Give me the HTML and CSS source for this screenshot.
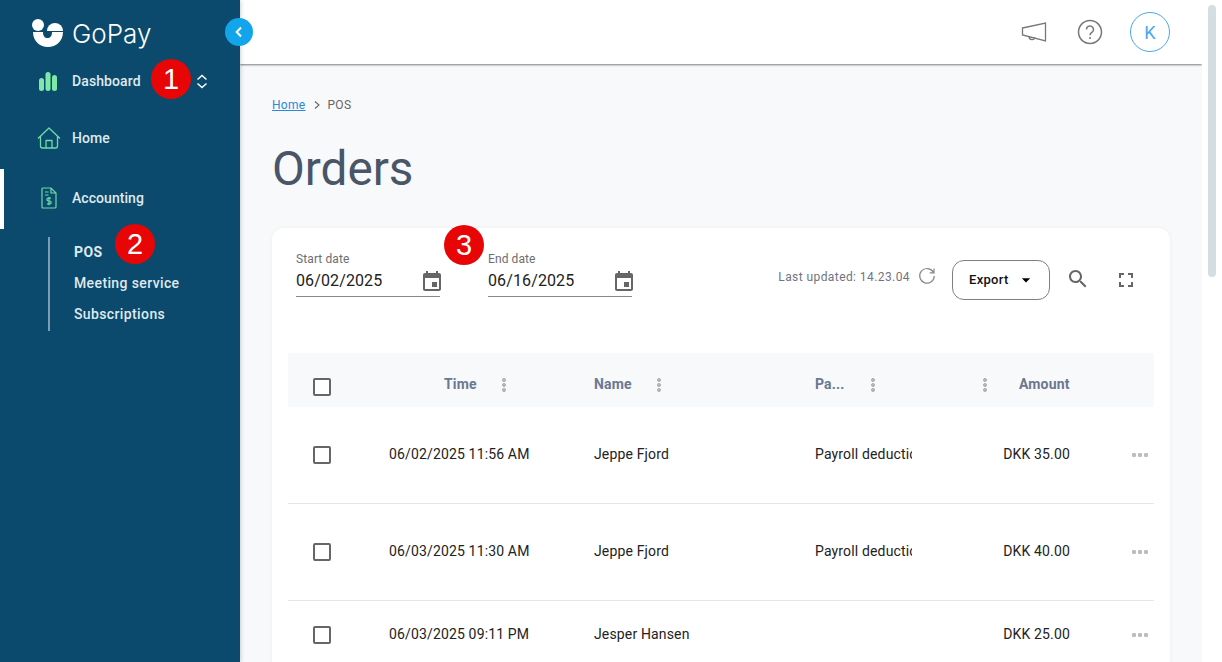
FILE: index.html
```html
<!DOCTYPE html>
<html lang="en">
<head>
<meta charset="utf-8">
<title>Orders</title>
<link rel="stylesheet" href="styles.css">
</head>
<body>
<div class="app">
  <aside class="sidebar">
    <div class="logo">
      <svg class="logo-mark" viewBox="0 0 32 28" width="32" height="28"><circle cx="6" cy="6" r="6" fill="#fff"/><path d="M15 12a8 8 0 0 1 16 0z" fill="#fff"/><path d="M1 13h10c0 4 1.800 6 4.500 6 2.700 0 4.500-2 4.500-6h11c0 9-7 15-15 15S1 22 1 13z" fill="#fff"/></svg>
      <span class="logo-text">GoPay</span>
    </div>
    <div class="switcher">
      <svg class="nav-icon" viewBox="0 0 18 19" width="18" height="19"><rect x="0" y="6" width="5" height="13" rx="2.500" fill="#7de8a8"/><rect x="6.500" y="0" width="5" height="19" rx="2.500" fill="#7de8a8"/><rect x="13" y="3" width="5" height="16" rx="2.500" fill="#7de8a8"/></svg>
      <span class="switcher-label">Dashboard</span>
      <svg class="chevrons" viewBox="0 0 12 15" width="12" height="15"><path d="M1.500 5.500 6 1.500l4.500 4M1.500 9.500l4.500 4 4.500-4" fill="none" stroke="#fff" stroke-width="1.500"/></svg>
    </div>
    <nav class="nav">
      <a class="nav-item">
        <svg class="home-icon" viewBox="0 0 24 22" width="24" height="22"><path d="M1 11.500 12 1l11 10.500M3.500 9.500V19a2 2 0 0 0 2 2h13a2 2 0 0 0 2-2V9.500M9 21v-7.500h6V21" fill="none" stroke="#6bdca6" stroke-width="1.300" stroke-linejoin="round"/></svg>
        <span>Home</span>
      </a>
      <a class="nav-item nav-item-active">
        <svg class="doc-icon" viewBox="0 0 16 22" width="16" height="22"><path d="M2 1h8l5 5v14a1 1 0 0 1-1 1H2a1 1 0 0 1-1-1V2a1 1 0 0 1 1-1zM10 1v5h5M4 5h3.500M4 8h3.500" fill="none" stroke="#6bdca6" stroke-width="1.200"/><path d="M10 11.200H7.300a1.200 1.200 0 0 0 0 2.800h1.400a1.200 1.200 0 0 1 0 2.800H6M8 10v8.200" fill="none" stroke="#6bdca6" stroke-width="1.200"/></svg>
        <span>Accounting</span>
      </a>
    </nav>
    <ul class="subnav">
      <li class="subnav-current">POS</li>
      <li>Meeting service</li>
      <li>Subscriptions</li>
    </ul>
    <button class="collapse" aria-label="Collapse"><svg viewBox="0 0 10 12" width="10" height="12"><path d="M7 1.500 2.700 6 7 10.500" fill="none" stroke="#fff" stroke-width="2"/></svg></button>
    <span class="badge badge-one">1</span>
    <span class="badge badge-two">2</span>
  </aside>

  <div class="main">
    <header class="topbar">
      <svg class="top-icon" viewBox="0 0 26 20" width="26" height="20"><path d="M1.500 6 24.500 1v18L1.500 13zM8 14.500c0 4 6 4 6 0.800" fill="none" stroke="#777" stroke-width="1.300"/></svg>
      <svg class="top-icon" viewBox="0 0 26 26" width="26" height="26"><circle cx="13" cy="13" r="11.500" fill="none" stroke="#777" stroke-width="1.500"/><path d="M9.500 10.500a3.500 3.500 0 1 1 5.500 2.800c-1.200.9-2 1.400-2 2.900" fill="none" stroke="#777" stroke-width="1.500"/><circle cx="13" cy="19" r="1" fill="#777"/></svg>
      <div class="avatar">K</div>
    </header>
    <div class="content">
      <div class="crumbs"><a class="crumb-link">Home</a><svg viewBox="0 0 8 10" width="8" height="10"><path d="M2 1.500 6 5 2 8.500" fill="none" stroke="#666" stroke-width="1.100"/></svg><span>POS</span></div>
      <h1 class="title">Orders</h1>
      <section class="card">
        <span class="badge badge-three">3</span>
        <div class="toolbar">
          <div class="field">
            <label class="field-label">Start date</label>
            <div class="field-value"><span>06/02/2025</span><svg class="icon-grey" viewBox="0 0 24 24" width="24" height="24"><path d="M17 12h-5v5h5v-5zM16 1v2H8V1H6v2H5c-1.110 0-1.990.9-1.990 2L3 19c0 1.100.89 2 2 2h14c1.100 0 2-.9 2-2V5c0-1.100-.9-2-2-2h-1V1h-2zm3 18H5V8h14v11z"/></svg></div>
          </div>
          <div class="field">
            <label class="field-label">End date</label>
            <div class="field-value"><span>06/16/2025</span><svg class="icon-grey" viewBox="0 0 24 24" width="24" height="24"><path d="M17 12h-5v5h5v-5zM16 1v2H8V1H6v2H5c-1.110 0-1.990.9-1.990 2L3 19c0 1.100.89 2 2 2h14c1.100 0 2-.9 2-2V5c0-1.100-.9-2-2-2h-1V1h-2zm3 18H5V8h14v11z"/></svg></div>
          </div>
          <div class="actions">
            <span class="updated">Last updated: 14.23.04</span>
            <svg class="refresh" viewBox="0 0 18 18" width="18" height="18"><path d="M15.500 5.500A7.300 7.300 0 1 0 16.300 9M16 1.500v4.300h-4.300" fill="none" stroke="#888" stroke-width="1.200"/></svg>
            <button class="export">Export<svg viewBox="0 0 24 24" width="20" height="20"><path d="M7 10l5 5 5-5z"/></svg></button>
            <svg class="icon-grey search" viewBox="0 0 24 24" width="24" height="24"><path d="M15.500 14h-.79l-.28-.27C15.410 12.590 16 11.110 16 9.500 16 5.910 13.090 3 9.500 3S3 5.910 3 9.500 5.910 16 9.500 16c1.610 0 3.090-.59 4.230-1.570l.27.28v.79l5 4.990L20.490 19l-4.990-5zm-6 0C7.010 14 5 11.990 5 9.500S7.010 5 9.500 5 14 7.010 14 9.500 11.990 14 9.500 14z"/></svg>
            <svg class="icon-grey fullscreen" viewBox="0 0 24 24" width="24" height="24"><path d="M7 14H5v5h5v-2H7v-3zm-2-4h2V7h3V5H5v5zm12 7h-3v2h5v-5h-2v3zM14 5v2h3v3h2V5h-5z"/></svg>
          </div>
        </div>

        <div class="table">
          <div class="row head">
            <div class="cell"><span class="check"></span></div>
            <div class="cell head-time"><span>Time</span><i class="dots"></i></div>
            <div class="cell head-gap"><span>Name</span><i class="dots"></i></div>
            <div class="cell head-pay"><span>Pa...</span><i class="dots"></i></div>
            <div class="cell head-amount"><i class="dots"></i><span>Amount</span></div>
            <div class="cell"></div>
          </div>
          <div class="row">
            <div class="cell"><span class="check"></span></div>
            <div class="cell">06/02/2025 11:56 AM</div>
            <div class="cell">Jeppe Fjord</div>
            <div class="cell clip">Payroll deduction</div>
            <div class="cell end">DKK 35.00</div>
            <div class="cell more"><i class="more-dots"></i></div>
          </div>
          <div class="row">
            <div class="cell"><span class="check"></span></div>
            <div class="cell">06/03/2025 11:30 AM</div>
            <div class="cell">Jeppe Fjord</div>
            <div class="cell clip">Payroll deduction</div>
            <div class="cell end">DKK 40.00</div>
            <div class="cell more"><i class="more-dots"></i></div>
          </div>
          <div class="row row-short">
            <div class="cell"><span class="check"></span></div>
            <div class="cell">06/03/2025 09:11 PM</div>
            <div class="cell">Jesper Hansen</div>
            <div class="cell clip"></div>
            <div class="cell end">DKK 25.00</div>
            <div class="cell more"><i class="more-dots"></i></div>
          </div>
        </div>
      </section>
    </div>
  </div>

  <div class="scrollbar"><div class="thumb"></div></div>
</div>
</body>
</html>
```

FILE: styles.css
```css
* { box-sizing: border-box; }
html, body { margin: 0; height: 100%; overflow: hidden; }
body { font-family: Roboto, "Liberation Sans", sans-serif; font-size: 14px; color: #222; background: #f8f9fb; }

.app { display: flex; height: 662px; overflow: hidden; }

/* Sidebar */
.sidebar { position: relative; z-index: 3; flex: 0 0 240px; width: 240px; background: #0b4a6c; color: #dfe9f0; box-shadow: 1px 0 4px rgba(0,0,0,.18); }
.logo { display: flex; align-items: center; height: 30px; margin: 18px 0 0 32px; gap: 8px; }
.logo-mark { display: block; }
.logo-text { font-family: Inter, sans-serif; font-weight: 300; font-size: 26px; color: #fff; }
.switcher { display: flex; align-items: center; height: 40px; margin-top: 13px; padding-left: 39px; font-weight: 500; font-size: 14px; letter-spacing: .1px; }
.switcher-label { margin-left: 15px; }
.chevrons { margin-left: 55px; }
.nav { margin-top: 7px; display: flex; flex-direction: column; }
.nav-item { position: relative; display: flex; align-items: center; height: 60px; font-weight: 500; font-size: 14px; letter-spacing: .05px; padding-left: 72px; }
.nav-item svg { position: absolute; }
.home-icon { left: 37px; top: 19px; }
.doc-icon { left: 41px; top: 19px; }
.nav-item-active::before { content: ""; position: absolute; left: 0; top: 1px; width: 4px; height: 60px; background: #fff; }
.subnav { list-style: none; margin: 9px 0 0 48px; padding: 0 0 1px 24px; border-left: 2px solid #7d9db2; font-weight: 500; font-size: 14px; letter-spacing: .38px; }
.subnav li { height: 31px; line-height: 31px; }
.subnav-current { font-weight: 700; }
.collapse { position: absolute; top: 18px; left: 225px; width: 28px; height: 28px; padding: 0; border: 0; border-radius: 50%; background: #12a5ec; display: flex; align-items: center; justify-content: center; }

/* Number badges laid over the screen */
.badge { position: absolute; width: 40px; height: 40px; border-radius: 50%; background: #e80505; color: #fff; font-family: "Liberation Sans", sans-serif; font-size: 29px; line-height: 40px; text-align: center; z-index: 5; }
.badge-one { left: 151px; top: 59px; }
.badge-two { left: 115px; top: 224px; }
.badge-three { left: 172px; top: -3px; }

/* Main */
.main { flex: 1; min-width: 0; display: flex; flex-direction: column; background: #f8f9fb; }
.topbar { position: relative; z-index: 2; height: 64px; flex: none; background: #fff; box-shadow: 0 1px 2px rgba(0,0,0,.5); display: flex; align-items: center; justify-content: flex-end; padding-right: 32px; gap: 30px; }
.top-icon { display: block; }
.avatar { width: 40px; height: 40px; margin-left: -3px; border: 1px solid #4aa8f2; border-radius: 50%; color: #4aa8f2; font-size: 18px; display: flex; align-items: center; justify-content: center; }
.content { flex: 1; padding: 32px 32px 0; }
.crumbs { display: flex; align-items: center; height: 18px; gap: 7px; font-size: 12px; letter-spacing: .3px; color: #666; }
.crumb-link { color: #2b87da; text-decoration: underline; }
.title { margin: 25px 0 29px; height: 60px; line-height: 60px; font-size: 47.700px; font-weight: 400; color: #4a5568; }

/* Card */
.card { position: relative; background: #fff; border-radius: 12px; box-shadow: 0 0 4px rgba(0,0,0,.05); padding: 0 16px; height: 480px; }
.toolbar { display: flex; height: 125px; padding: 24px 16px 0 8px; gap: 48px; }
.field { width: 144px; height: 45px; border-bottom: 1px solid #888; }
.field-label { display: block; font-size: 12px; line-height: 14px; letter-spacing: .1px; color: #6e6e6e; }
.field-value { display: flex; align-items: center; justify-content: space-between; height: 29px; font-size: 16px; letter-spacing: .12px; color: #222; }
.field-value svg { margin-right: -4px; margin-top: 3px; }
.icon-grey { fill: #666; display: block; flex: none; }
.actions { margin-left: auto; display: flex; align-items: flex-start; padding-top: 8px; }
.updated { font-size: 12px; line-height: 18px; letter-spacing: .42px; color: #6f7580; margin-top: 8px; }
.refresh { margin: 7px 0 0 8px; }
.export { display: flex; align-items: center; justify-content: flex-start; gap: 7px; width: 98px; height: 40px; margin-left: 16px; padding: 0 0 1px 16px; background: #fff; border: 1px solid #808080; border-radius: 12px; font: 500 13px Roboto, sans-serif; color: #111; letter-spacing: .3px; }
.search { margin: 7px 0 0 16px; }
.fullscreen { margin: 8px 0 0 24px; }

/* Table */
.table { font-size: 14px; letter-spacing: .15px; }
.row { display: grid; grid-template-columns: 101px 205px 221px 97px 158px 84px; height: 97px; border-bottom: 1px solid #e3e5e8; align-items: center; }
.row-short { border-bottom: 0; height: 68px; }
.cell { display: flex; align-items: center; white-space: nowrap; overflow: hidden; min-width: 0; color: #222; padding-bottom: 2px; }
.cell:first-child, .more { padding-bottom: 0; }
.clip { overflow: hidden; }
.end { justify-content: flex-end; }
.check { display: block; width: 18px; height: 18px; margin-left: 25px; border: 2px solid #666; border-radius: 2px; background: #fff; }
.more { justify-content: flex-end; padding-right: 6px; }
.more-dots { display: block; width: 16px; height: 4px; background: radial-gradient(circle at 2px 2px, #bdbdbd 2px, transparent 2.400px) 0 0 / 6px 4px repeat-x; }

.head { height: 54px; background: #f8f9fb; border-bottom: 0; font-weight: 700; }
.head .cell { height: 54px; color: #6b788e; gap: 25px; padding-top: 8px; padding-bottom: 0; overflow: visible; }
.head .cell:first-child { padding-top: 14px; }
.head-time { padding-left: 55px; }
.head-pay { gap: 27px !important; }
.head-amount { padding-left: 71px; gap: 32px !important; }
.dots { display: block; width: 4px; height: 14px; margin-top: 2px; background: radial-gradient(circle at 2px 2px, #b5b5b5 1.800px, transparent 2.200px) 0 0 / 4px 5px repeat-y; }

/* Page scrollbar */
.scrollbar { flex: 0 0 20px; position: relative; z-index: 4; background: #fff; padding: 5px 6px 0; }
.thumb { width: 8px; height: 272px; background: #d4dde1; border-radius: 4px; }
```
